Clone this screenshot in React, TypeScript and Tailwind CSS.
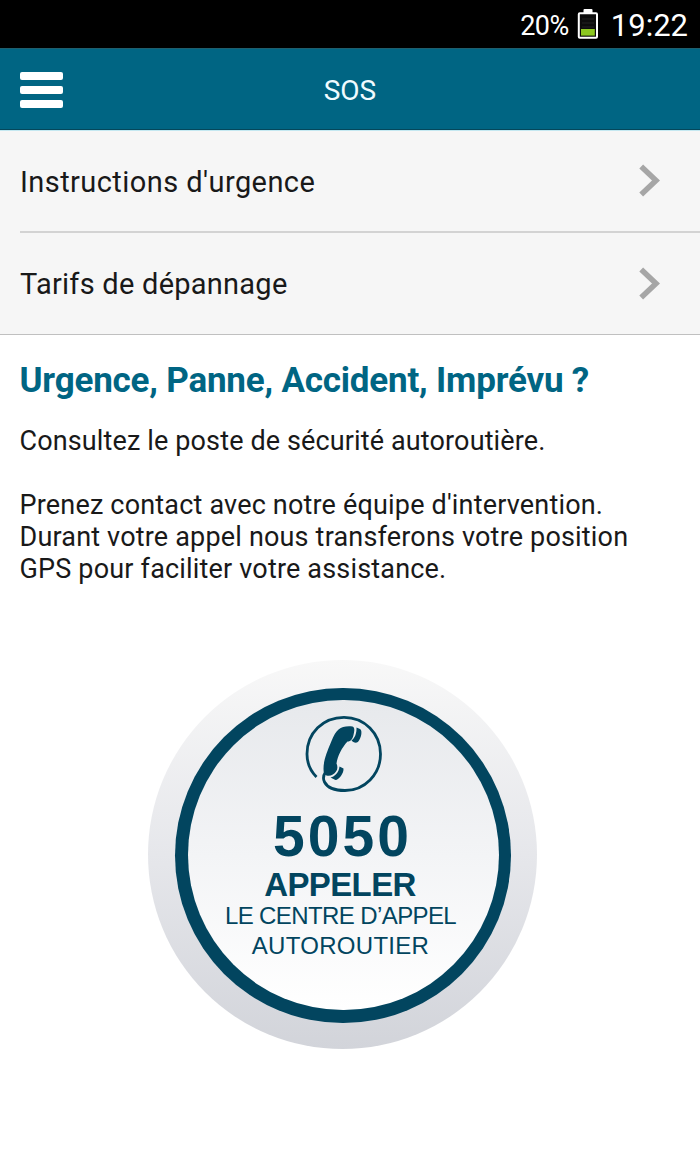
import React, { useState } from 'react';

const menuItems = ["Instructions d'urgence", 'Tarifs de dépannage'];

const BatteryIcon: React.FC = () => (
  <svg width="22" height="32" viewBox="0 0 22 32" fill="none">
    <rect x="6.5" y="1" width="9" height="5" rx="1" fill="#fff" />
    <rect x="1.8" y="5.3" width="18.2" height="24.4" rx="1" fill="#0c0c0c" stroke="#fff" strokeWidth="2" />
    <path d="M5 11h12M5 15h12M5 19h12" stroke="#222" strokeWidth="1" />
    <rect x="4" y="21" width="13.8" height="6.6" fill="#8cc820" />
  </svg>
);

const StatusBar: React.FC = () => (
  <div className="flex h-12 items-center justify-end bg-black pr-3 text-white">
    <span className="mt-[4px] text-[27px] leading-[44px] tracking-[-0.5px]">20%</span>
    <span className="ml-2 mr-3 mt-[-1px]">
      <BatteryIcon />
    </span>
    <span className="mt-[3px] text-[31px] leading-[45px]">19:22</span>
  </div>
);

const Header: React.FC = () => {
  const [menuOpen, setMenuOpen] = useState(false);

  return (
    <header className="grid h-[82px] grid-cols-3 items-center border-b border-t border-b-[#04475b] border-t-[#1f5f6e] bg-[#006583] px-5">
      <button
        aria-label="Menu"
        aria-expanded={menuOpen}
        onClick={() => setMenuOpen(!menuOpen)}
        className="mt-px flex w-[43px] flex-col gap-[6px]"
      >
        <span className="h-2 w-full rounded-[2px] bg-white" />
        <span className="h-2 w-full rounded-[2px] bg-white" />
        <span className="h-2 w-full rounded-[2px] bg-white" />
      </button>
      <h1 className="mt-[4px] text-center text-[28px] leading-8 text-[#f0fbff]">SOS</h1>
    </header>
  );
};

const Chevron: React.FC = () => (
  <svg width="22" height="34" viewBox="0 0 22 34" fill="none">
    <path d="M2.2 2.500 L17 16.500 L2.2 30.500" stroke="#a6a6a6" strokeWidth="5.5" />
  </svg>
);

const PhoneIcon: React.FC = () => (
  <svg width="80" height="80" viewBox="0 0 80 80" fill="none">
    {/* Cord loops round the handset */}
    <path
      d="M14.500 63 C8.500 57 5 49 5 40 C5 19 21 3.300 42 3.300 C62.500 3.300 78.500 19.500 78.500 40 C78.500 60.500 62.500 76.500 43 76.500 C32 76.500 25 73 22.500 68 C21 65 21.500 61 23.500 58"
      stroke="#02455f"
      strokeWidth="2.8"
    />
    <path
      d="M50.500 12.500 C39 11.500 34.500 15 29.500 27 C24 40 21.500 47 21.500 55 C21.500 59 22.500 61 24.500 61.500 C28.500 62.500 32 60.500 34 57.500 C36 54.500 35.500 51.500 34.500 49.500 C35.500 42 40 33.500 45.500 27.500 C49 27.500 50.500 25 51.500 21 C52.500 17 53 13.500 50.500 12.500 Z"
      fill="#02455f"
    />
    <path d="M54.500 13.500 L58 15 C61.500 17 58 27.500 55 28.500 C53 29 50.500 28 49.500 26.500 C53 24 54.800 19 54.500 13.500 Z" fill="#02455f" />
    <path d="M37.500 52.500 L41.500 54.500 C42 59 37 66 33.500 66 L28.500 63.500 C33 62.500 37 58 37.500 52.500 Z" fill="#02455f" />
  </svg>
);

const CallButton: React.FC = () => (
  <button className="flex h-[389px] w-[389px] items-center justify-center rounded-full bg-linear-to-b from-[#f8f8f8] via-[#e6e7eb] to-[#d2d4da] pl-px pt-px">
    <span className="flex h-[335px] w-[336px] flex-col items-center rounded-full bg-[#02455f] p-[12.5px]">
      <span className="flex h-full w-full flex-col items-center rounded-full bg-linear-to-b from-[#e7e9ec] via-[#f3f4f6] to-[#ffffff] pr-[4px] pt-[13.5px] font-['Liberation_Sans',sans-serif] text-[#02455f]">
        <span className="ml-[2px]">
          <PhoneIcon />
        </span>
        <span className="mt-[12px] pl-[3px] text-[57px] font-bold leading-[60px] tracking-[3px]">5050</span>
        <span className="mt-px pr-[2px] text-[33px] font-bold leading-[36px] tracking-[-0.6px]">APPELER</span>
        <span className="-mt-[2px] whitespace-nowrap pr-px text-[24px] leading-[29px] tracking-[-0.6px]">
          LE CENTRE D’APPEL
        </span>
        <span className="mt-px whitespace-nowrap pr-px text-[24px] leading-[30px] tracking-[0.3px]">AUTOROUTIER</span>
      </span>
    </span>
  </button>
);

const App: React.FC = () => {
  return (
    <div className="h-[1151px] w-[700px] overflow-hidden bg-white font-['Roboto',sans-serif] text-[#191919]">
      <StatusBar />
      <Header />

      {/* Links */}
      <nav className="border-b border-t border-b-[#c0c0c0] border-t-[#c4e8f1] bg-[#f6f6f6] pl-5">
        {menuItems.map((item, index) => (
          <a
            key={item}
            href="#"
            className={`flex items-center justify-between pr-[39px] ${
              index === 0
                ? 'h-[102px] border-b-2 border-[#d3d3d3] tracking-[0.43px]'
                : 'h-[101px] tracking-[0.25px]'
            }`}
          >
            <span className="mt-px text-[29px] leading-9">{item}</span>
            <Chevron />
          </a>
        ))}
      </nav>

      {/* Emergency message */}
      <main className="px-5 pt-[26px]">
        <h2 className="-ml-[0.5px] whitespace-nowrap text-[35px] font-bold leading-10 tracking-[-0.2px] text-[#006583]">
          Urgence, Panne, Accident, Imprévu ?
        </h2>
        <div className="-ml-[0.5px] mt-6 whitespace-nowrap text-[27px] leading-8 tracking-[0.18px]">
          <p className="tracking-[0.13px]">Consultez le poste de sécurité autoroutière.</p>
          <p className="mt-8">
            Prenez contact avec notre équipe d'intervention.
            <br />
            Durant votre appel nous transferons votre position
            <br />
            GPS pour faciliter votre assistance.
          </p>
        </div>
        <div className="ml-[128px] mt-[75px]">
          <CallButton />
        </div>
      </main>
    </div>
  );
};

export default App;
